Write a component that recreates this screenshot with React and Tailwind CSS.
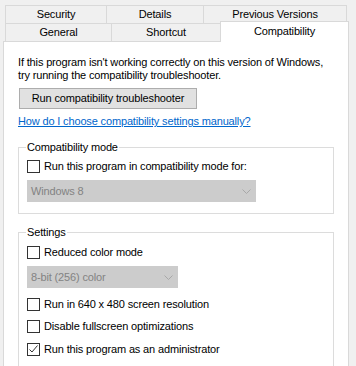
import React from "react";

const rowTabs = [
  { label: "Security", w: "w-[101px]" },
  { label: "Details", w: "w-[97px]" },
  { label: "Previous Versions", w: "w-[144px] border-r" },
];

function CheckBox({ checked = false, label, className = "" }) {
  return (
    <label className={`flex items-center gap-[4px] ${className}`}>
      <span className="flex h-[13px] w-[13px] shrink-0 items-center justify-center border border-[#333333] bg-white">
        {checked ? (
          <svg width="11" height="11" viewBox="0 0 11 11">
            <polyline points="1.5,5.5 4,8 9.5,1.5" fill="none" stroke="#333333" strokeWidth="1" />
          </svg>
        ) : null}
      </span>
      <span className="leading-[13px]">{label}</span>
    </label>
  );
}

function DisabledSelect({ value, width, className = "" }) {
  return (
    <div className={`flex h-[22px] items-center justify-between bg-[#cccccc] pl-[4px] pr-[5px] text-[#838383] ${width} ${className}`}>
      <span className="leading-[13px]">{value}</span>
      <svg width="9" height="5" viewBox="0 0 9 5">
        <polyline points="0.5,0.5 4.5,4.5 8.5,0.5" fill="none" stroke="#a8a8a8" strokeWidth="1" />
      </svg>
    </div>
  );
}

function GroupBox({ title, children, className = "" }) {
  return (
    <fieldset className={`w-[316px] border border-[#dcdcdc] pl-[8px] ${className}`}>
      <legend className="-ml-[1px] px-[1px] leading-[13px]">{title}</legend>
      {children}
    </fieldset>
  );
}

export default function App() {
  return (
    <div className="h-[366px] w-[356px] overflow-hidden bg-[#f0f0f0] font-['Liberation_Sans',Arial,sans-serif] text-[11px] tracking-[-0.15px] text-black">
      <div className="pl-[5px] pt-[5px]">
        <div className="flex h-[18px]">
          {rowTabs.map((tab) => (
            <div
              key={tab.label}
              className={`flex items-center justify-center border-l border-t border-[#d9d9d9] ${tab.w}`}
            >
              {tab.label}
            </div>
          ))}
        </div>
        <div className="flex h-[18px] items-end">
          <div className="flex h-[18px] w-[106px] items-center justify-center border-l border-t border-[#d9d9d9]">
            General
          </div>
          <div className="flex h-[18px] w-[109px] items-center justify-center border-l border-t border-[#d9d9d9]">
            Shortcut
          </div>
          <div className="relative z-10 -mb-[1px] flex h-[21px] w-[129px] items-center justify-center border-l border-r border-t border-[#d9d9d9] bg-white pb-[1px]">
            Compatibility
          </div>
        </div>
      </div>

      <div className="ml-[3px] h-[400px] w-[346px] border border-[#d9d9d9] bg-white px-[14px] pt-[14px]">
        <p className="leading-[13px]">
          If this program isn't working correctly on this version of Windows,
          <br />
          try running the compatibility troubleshooter.
        </p>
        <button className="ml-[1px] mt-[6px] flex h-[21px] w-[178px] items-center justify-center border border-[#adadad] bg-[#e1e1e1]">
          Run compatibility troubleshooter
        </button>
        <a className="mt-[6px] block leading-[13px] text-[#0066cc] underline">
          How do I choose compatibility settings manually?
        </a>

        <GroupBox title="Compatibility mode" className="mt-[13px] pb-[11px]">
          <CheckBox label="Run this program in compatibility mode for:" className="mt-[6px]" />
          <DisabledSelect value="Windows 8" width="w-[229px]" className="mt-[7px]" />
        </GroupBox>

        <GroupBox title="Settings" className="mt-[12px] pb-[20px]">
          <CheckBox label="Reduced color mode" className="mt-[7px]" />
          <DisabledSelect value="8-bit (256) color" width="w-[151px]" className="mt-[7px]" />
          <CheckBox label="Run in 640 x 480 screen resolution" className="mt-[10px]" />
          <CheckBox label="Disable fullscreen optimizations" className="mt-[9px]" />
          <CheckBox label="Run this program as an administrator" checked className="mt-[10px]" />
        </GroupBox>
      </div>
    </div>
  );
}
